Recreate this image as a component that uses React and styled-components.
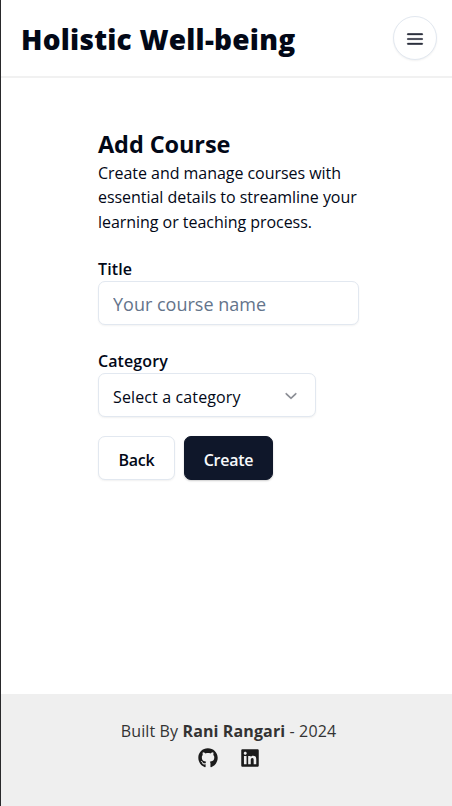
import React from "react";
import styled, { createGlobalStyle } from "styled-components";
import { FaGithub, FaLinkedin } from "react-icons/fa";
import { RxHamburgerMenu, RxChevronDown } from "react-icons/rx";

const GlobalStyle = createGlobalStyle`
  *, *::before, *::after { box-sizing: border-box; }
  body {
    margin: 0;
    background: #fff;
    color: #020817;
    font-family: "Open Sans", "Noto Sans", sans-serif;
    font-size: 16px;
    line-height: 24.4px;
  }
  button, input { font: inherit; color: inherit; }
  h1, h2, p { margin: 0; }
`;

const Page = styled.div`
  display: flex;
  flex-direction: column;
  height: 806px;
  border-left: 1px solid #29292b;
`;

const Header = styled.header`
  display: flex;
  flex: none;
  align-items: center;
  justify-content: space-between;
  height: 78px;
  padding: 0 15px 0 20px;
  border-bottom: 2px solid #f1f1f1;
`;

const Brand = styled.h1`
  font-size: 28px;
  font-weight: 800;
  line-height: 36px;
  letter-spacing: 0.24px;
  white-space: nowrap;
  padding-top: 2px;
`;

const MenuButton = styled.button`
  display: grid;
  place-items: center;
  width: 44px;
  height: 44px;
  padding: 2px 0 0;
  border: 1px solid #e2e8f0;
  border-radius: 50%;
  background: #fff;
  box-shadow: 0 1px 2px rgba(0, 0, 0, 0.06);
  svg { stroke: currentColor; stroke-width: 0.35px; }
`;

const Main = styled.main`
  flex: 1;
  padding: 51px 92px 0 97px;
`;

const Title = styled.h2`
  font-size: 23.5px;
  font-weight: 700;
  line-height: 30px;
  letter-spacing: -0.1px;
  white-space: nowrap;
  padding-bottom: 2px;
`;

const Description = styled.p`
  white-space: nowrap;
  letter-spacing: -0.04px;
`;

const Form = styled.form`
  display: flex;
  flex-direction: column;
  align-items: flex-start;
  padding-top: 24px;
`;

const Field = styled.div`
  width: 100%;
  margin-bottom: ${({ $gap }) => $gap}px;
`;

const Label = styled.label`
  display: block;
  height: 23px;
  line-height: 23px;
  font-weight: 600;
  letter-spacing: 0.1px;
`;

const Input = styled.input`
  display: block;
  width: 261px;
  height: 44px;
  padding: 2px 14px 0;
  border: 1px solid #e2e8f0;
  border-radius: 7px;
  box-shadow: 0 1px 2px rgba(0, 0, 0, 0.05);
  font-size: 18px;
  outline: none;
  &::placeholder { color: #64748b; opacity: 1; }
`;

const Select = styled.button`
  display: flex;
  align-items: center;
  justify-content: space-between;
  width: 218px;
  height: 44px;
  padding: 4px 15px 0 14px;
  border: 1px solid #e2e8f0;
  border-radius: 7px;
  background: #fff;
  box-shadow: 0 1px 2px rgba(0, 0, 0, 0.06);
  letter-spacing: 0.13px;
  svg {
    opacity: 0.5;
    margin-top: -4px;
    stroke: currentColor;
    stroke-width: 0.35px;
  }
`;

const Actions = styled.div`
  display: flex;
  gap: 9px;
`;

const Button = styled.button`
  width: ${({ $width }) => $width}px;
  height: 44px;
  padding: 4px 0 0;
  border: 1px solid ${({ $primary }) => ($primary ? "#0f172a" : "#e2e8f0")};
  border-radius: 7px;
  background: ${({ $primary }) => ($primary ? "#0f172a" : "#fff")};
  color: ${({ $primary }) => ($primary ? "#f8fafc" : "#020817")};
  box-shadow: 0 1px 2px rgba(0, 0, 0, ${({ $primary }) => ($primary ? 0.2 : 0.06)});
  font-weight: 600;
  letter-spacing: -0.25px;
`;

const Footer = styled.footer`
  display: flex;
  flex: none;
  flex-direction: column;
  align-items: center;
  height: 112px;
  padding: 25px 0 0 4px;
  background: #efefef;
  color: #333;
`;

const Credit = styled.p`
  white-space: nowrap;
  letter-spacing: 0.12px;
`;

const Socials = styled.div`
  display: flex;
  gap: 22px;
  padding: 5px 0 0 1px;
  color: #1b1b1b;
  svg { display: block; }
`;

export default function App() {
  return (
    <>
      <GlobalStyle />
      <Page>
        <Header>
          <Brand>Holistic Well-being</Brand>
          <MenuButton aria-label="Menu"><RxHamburgerMenu size={18} /></MenuButton>
        </Header>
        <Main>
          <Title>Add Course</Title>
          <Description>
            Create and manage courses with<br />
            essential details to streamline your<br />
            learning or teaching process.
          </Description>
          <Form>
            <Field $gap={25}>
              <Label htmlFor="title">Title</Label>
              <Input id="title" placeholder="Your course name" />
            </Field>
            <Field $gap={19}>
              <Label>Category</Label>
              <Select type="button">
                <span>Select a category</span>
                <RxChevronDown size={18} />
              </Select>
            </Field>
            <Actions>
              <Button type="button" $width={77}>Back</Button>
              <Button type="button" $width={89} $primary>Create</Button>
            </Actions>
          </Form>
        </Main>
        <Footer>
          <Credit>Built By <strong>Rani Rangari</strong> - 2024</Credit>
          <Socials>
            <FaGithub size={20} />
            <FaLinkedin size={20} />
          </Socials>
        </Footer>
      </Page>
    </>
  );
}
